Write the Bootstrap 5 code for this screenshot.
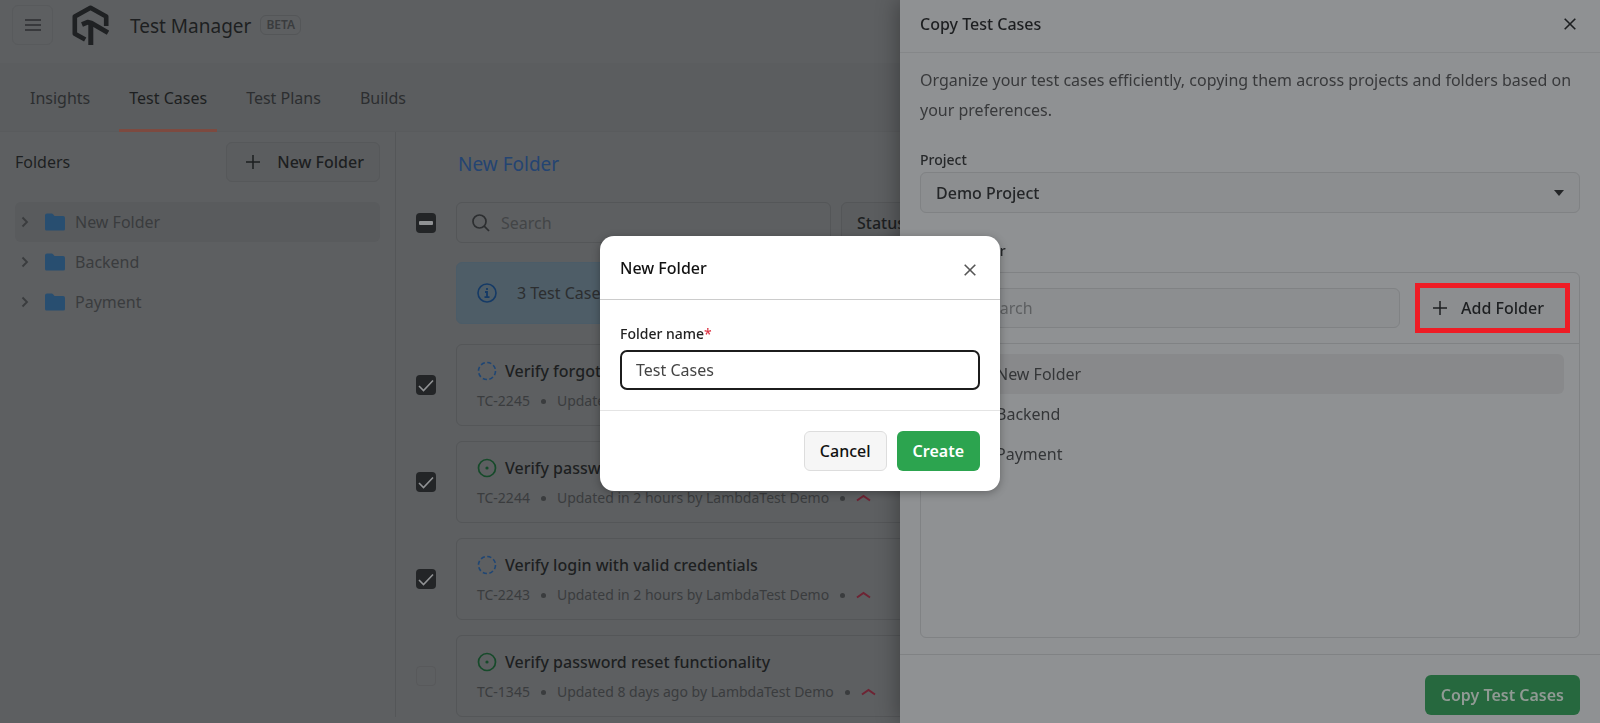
<!DOCTYPE html>
<html lang="en">
<head>
<meta charset="utf-8">
<meta name="viewport" content="width=device-width, initial-scale=1">
<title>Test Manager</title>
<link href="https://cdn.jsdelivr.net/npm/bootstrap@5.3.0/dist/css/bootstrap.min.css" rel="stylesheet">
<style>
  :root { --page: #5d5f61; --line: #545658; --ink: #1d1f21; --soft: #2c2e30; --mute: #3a3c3e; --panel: #8f9193; --panel-line: #808284; }
  body { font-family: "Noto Sans", "Open Sans", sans-serif; font-size: 16px; line-height: 24px; color: var(--soft); background: var(--page); overflow-x: hidden; }
  h1, h2, p { margin: 0; font-size: 16px; line-height: 24px; font-weight: 400; }
  button, input, select { font-family: inherit; }
  svg { flex: none; display: block; }
  a { text-decoration: none; color: inherit; }
  .topbar { height: 63px; padding: 5px 12px 0; }
  .menu-btn { width: 41px; height: 40px; padding: 0; border: 1px solid #585a5c; border-radius: 6px; color: var(--soft); margin-right: 19px; }
  .brand { height: 40px; }
  .app-name { font-size: 19px; color: var(--ink); margin: 2px 9px 0 21px; }
  .beta { font-size: 12px; line-height: 18px; font-weight: 600; color: var(--mute); border: 1px solid var(--line); border-radius: 6px; padding: 0 5px; }
  .tabs { height: 69px; background: #5b5d5f; border-bottom: 1px solid #595b5d; padding-left: 20px; gap: 19px; }
  .tabs a { padding: 4px 10px 0; height: 69px; border-bottom: 3px solid transparent; display: flex; align-items: center; }
  .tabs a.on { border-color: #7d4a40; color: var(--ink); }
  .side { width: 396px; border-right: 1px solid var(--line); padding: 10px 15px; }
  .side h2 { color: var(--ink); }
  .soft-btn { height: 40px; padding: 0 15px; border: 1px solid #56585a; border-radius: 6px; background: #5b5d5f; color: var(--ink); font-size: 16px; line-height: 24px; font-weight: 500; }
  .side .soft-btn { width: 154px; padding-left: 19px; }
  .tree { list-style: none; margin: 0; padding: 0; }
  .tree a { display: flex; align-items: center; height: 40px; padding-left: 6px; border-radius: 6px; color: var(--mute); }
  .tree a.on { background: #595b5d; }
  .folder-icon { margin: 0 10px 0 16px; color: #284e70; }
  .main { padding: 10px 20px 0; }
  .crumb { font-size: 19px; line-height: 28px; color: #244472; margin-left: 42px; }
  .line-row { display: flex; align-items: center; gap: 20px; }
  .tick { appearance: none; width: 20px; height: 20px; margin: 0; flex: none; border-radius: 4px; background: #232527 center/20px no-repeat; }
  .tick:checked { background-image: url("data:image/svg+xml,%3Csvg xmlns='http://www.w3.org/2000/svg' viewBox='0 0 20 20'%3E%3Cpath d='M3 11l4.500 4.500L17 5.500' fill='none' stroke='%23909294' stroke-width='1.600'/%3E%3C/svg%3E"); }
  .tick.some { background-image: url("data:image/svg+xml,%3Csvg xmlns='http://www.w3.org/2000/svg' viewBox='0 0 20 20'%3E%3Crect x='3' y='8' width='14' height='4' rx='1' fill='%23909294'/%3E%3C/svg%3E"); }
  .tick.off { background-color: transparent; border: 1px solid #58595b; }
  .find { display: flex; align-items: center; height: 41px; border: 1px solid var(--line); border-radius: 6px; color: var(--soft); }
  .find input { border: 0; background: none; outline: 0; width: 100%; padding: 0; color: inherit; }
  .find input::placeholder { color: #434547; opacity: 1; }
  .find-main { width: 375px; padding-left: 15px; gap: 11px; }
  .status { height: 41px; width: 140px; margin-left: -10px; padding: 0 15px; border: 1px solid var(--line); border-radius: 6px; background: #5b5d5f; color: var(--ink); font-weight: 500; appearance: none; }
  .note { margin: 19px 0 20px 40px; height: 62px; border: 1px solid #4b5c68; border-radius: 6px; background: #4e5d67; padding-left: 20px; gap: 20px; }
  .cases { gap: 15px; }
  .tcase { height: 82px; flex: 1; border: 1px solid var(--line); border-radius: 6px; padding: 14px 20px 0; }
  .tcase h2 { font-weight: 500; color: var(--ink); }
  .meta { font-size: 14px; line-height: 20px; color: var(--mute); gap: 11px; margin-top: 8px; }
  .dot { width: 5px; height: 5px; border-radius: 50%; background: var(--mute); }
  .drawer { position: fixed; top: 0; right: 0; bottom: 0; width: 700px; max-width: 100%; background: var(--panel); box-shadow: -3px 0 20px rgba(0,0,0,.3); color: #38393b; }
  .drawer-head { height: 53px; padding: 0 24px 4px 20px; border-bottom: 1px solid #858789; color: var(--ink); }
  .drawer-head h2, .dialog-head h2 { font-weight: 500; }
  .drawer-body { padding: 12px 20px 16px; }
  .intro { line-height: 30px; margin-bottom: 23px; }
  .field-label { font-size: 14px; line-height: 24px; font-weight: 500; color: #26282a; }
  .icon-btn { border: 0; background: none; padding: 0; color: inherit; }
  .pick { height: 41px; width: 100%; border: 1px solid var(--panel-line); border-radius: 6px; padding: 0 15px; color: #242628; font-weight: 500; background: #8c8e90 url("data:image/svg+xml,%3Csvg xmlns='http://www.w3.org/2000/svg' viewBox='0 0 10 6'%3E%3Cpath d='M0 0h10L5 6z' fill='%23242628'/%3E%3C/svg%3E") right 15px center/10px 6px no-repeat; appearance: none; margin-bottom: 26px; }
  .folder-box { border: 1px solid var(--panel-line); border-radius: 6px; margin-top: 9px; }
  .folder-bar { padding: 15px 14px 15px 15px; border-bottom: 1px solid var(--panel-line); gap: 20px; }
  .drawer .find { border-color: var(--panel-line); background: #8c8e90; height: 40px; padding-left: 15px; gap: 12px; }
  .drawer .find input::placeholder { color: #5d5f61; }
  .drawer .soft-btn { width: 145px; padding: 0 0 0 13px; gap: 14px; border: 0; border-radius: 0; background: #8c8e90; outline: 5px solid #ee1c25; }
  .drawer .tree { padding: 10px 15px; }
  .drawer .tree a { color: #343638; }
  .drawer .tree a.on { background: #88898b; }
  .drawer .folder-icon { color: #3a6a94; }
  .drawer-foot { padding: 20px 20px 8px; border-top: 1px solid var(--panel-line); }
  .go { height: 40px; padding: 0 16px; border: 0; border-radius: 6px; font-weight: 600; font-size: 16px; line-height: 24px; color: #fff; background: #2ca44f; }
  .drawer .go { background: #26683e; color: #909a94; }
  .dialog-wrap { position: fixed; inset: 0; display: flex; align-items: center; justify-content: center; }
  .dialog { width: 400px; border-radius: 14px; background: #fff; margin-top: 4px; box-shadow: 0 2px 8px rgba(0,0,0,.3); }
  .dialog-head { height: 64px; padding: 0 24px 0 20px; border-bottom: 1px solid #ccc; color: #111; }
  .dialog-head .icon-btn { color: #555; padding-top: 4px; }
  .dialog-body { padding: 21px 20px 20px; border-bottom: 1px solid #e4e4e4; }
  .dialog-body label { color: #222; }
  .dialog-body input { width: 100%; height: 40px; margin-top: 4px; border: 2px solid #1c1c1c; border-radius: 7px; padding: 0 14px; color: #444; outline: 0; display: block; }
  .dialog-foot { padding: 20px; gap: 10px; }
  .dialog .soft-btn { background: #f6f6f6; border-color: #ddd; color: #111; }
</style>
<script src="https://cdn.jsdelivr.net/npm/bootstrap@5.3.0/dist/js/bootstrap.bundle.min.js"></script>
</head>
<body>
<svg width="0" height="0" class="position-absolute" aria-hidden="true">
  <symbol id="plus" viewBox="0 0 14 14"><path d="M7 0v14M0 7h14" stroke="currentColor" stroke-width="1.500"/></symbol>
  <symbol id="chev" viewBox="0 0 8 12"><path d="M1.500 1.500L6 6l-4.500 4.500" fill="none" stroke="currentColor" stroke-width="1.800"/></symbol>
  <symbol id="folder" viewBox="0 0 20 18"><path d="M0 2.500Q0 .5 2 .5h4.500q1 0 1.800 1L9.500 3H18q2 0 2 2v11q0 1.500-1.500 1.500h-17Q0 17.500 0 16z" fill="currentColor"/></symbol>
  <symbol id="cross" viewBox="0 0 12 12"><path d="M.7.7l10.600 10.600M11.300.7L.7 11.300" stroke="currentColor" stroke-width="1.600"/></symbol>
  <symbol id="lens" viewBox="0 0 18 18"><circle cx="7.500" cy="7.500" r="6.500" fill="none" stroke="currentColor" stroke-width="1.700"/><path d="M12.200 12.200L17 17" stroke="currentColor" stroke-width="1.700"/></symbol>
  <symbol id="dashed" viewBox="0 0 20 20"><circle cx="10" cy="10" r="8.500" fill="none" stroke="#1f4674" stroke-width="1.600" stroke-dasharray="4.200 2.475"/></symbol>
  <symbol id="open" viewBox="0 0 20 20"><circle cx="10" cy="10" r="8.500" fill="none" stroke="#164a2a" stroke-width="1.700"/><circle cx="10" cy="10" r="1.600" fill="#164a2a"/></symbol>
  <symbol id="up" viewBox="0 0 15 8"><path d="M1 6.500L7.500 2 14 6.500" fill="none" stroke="#6e2333" stroke-width="2"/></symbol>
</svg>

<header class="topbar d-flex align-items-start">
  <button class="menu-btn bg-transparent d-flex align-items-center justify-content-center" aria-label="Menu"><svg width="16" height="12"><path d="M0 1h16M0 6h16M0 11h16" stroke="currentColor" stroke-width="1.500"/></svg></button>
  <svg width="37" height="40" viewBox="0 0 37 40"><g fill="none" stroke="#1f2123" stroke-width="4.600" stroke-linejoin="round"><path d="M34.200 21V11.500L18.500 2.700 2.800 11.500v17.300l10.400 5.800"/><path d="M10 19.500l5.500-2.300 4 1 16.500 9.500" stroke-width="4.800"/><path d="M18.800 18v22" stroke-width="5"/></g></svg>
  <div class="brand d-flex align-items-center">
    <h1 class="app-name">Test Manager</h1><span class="beta">BETA</span>
  </div>
</header>
<nav class="tabs d-flex">
  <a href="#">Insights</a><a href="#" class="on">Test Cases</a><a href="#">Test Plans</a><a href="#">Builds</a>
</nav>
<div class="d-flex">
  <aside class="side flex-shrink-0">
    <div class="d-flex justify-content-between align-items-center mb-3">
      <h2>Folders</h2>
      <button class="soft-btn d-flex align-items-center justify-content-between"><svg width="14" height="14"><use href="#plus"/></svg>New Folder</button>
    </div>
    <ul class="tree mt-1 pt-1">
      <li><a href="#" class="on"><svg width="8" height="12"><use href="#chev"/></svg><svg class="folder-icon" width="20" height="18"><use href="#folder"/></svg>New Folder</a></li>
      <li><a href="#"><svg width="8" height="12"><use href="#chev"/></svg><svg class="folder-icon" width="20" height="18"><use href="#folder"/></svg>Backend</a></li>
      <li><a href="#"><svg width="8" height="12"><use href="#chev"/></svg><svg class="folder-icon" width="20" height="18"><use href="#folder"/></svg>Payment</a></li>
    </ul>
  </aside>
  <main class="main flex-grow-1">
    <div class="mb-4 pt-2"><a href="#" class="crumb d-block">New Folder</a></div>
    <div class="line-row">
      <input type="checkbox" class="tick some" aria-label="Select all">
      <div class="find find-main"><svg width="18" height="18"><use href="#lens"/></svg><input type="search" placeholder="Search" aria-label="Search test cases"></div>
      <select class="status" aria-label="Status"><option>Status</option></select>
    </div>
    <div class="note d-flex align-items-center"><svg width="20" height="20" fill="none" stroke="#153a66" stroke-width="1.600"><circle cx="10" cy="10" r="9"/><path d="M10 5v2M8 9h2v5M7.500 14.200h5" stroke-width="1.800"/></svg><span>3 Test Cases selected</span></div>
    <div class="cases d-flex flex-column">
      <div class="line-row"><input type="checkbox" class="tick" checked aria-label="TC-2245"><article class="tcase">
        <div class="d-flex align-items-center gap-2"><svg width="20" height="20"><use href="#dashed"/></svg><h2>Verify forgot password flow</h2></div>
        <div class="meta d-flex align-items-center"><span>TC-2245</span><i class="dot"></i><span>Updated in 2 hours by LambdaTest Demo</span><i class="dot"></i><svg width="15" height="8"><use href="#up"/></svg></div></article></div>
      <div class="line-row"><input type="checkbox" class="tick" checked aria-label="TC-2244"><article class="tcase">
        <div class="d-flex align-items-center gap-2"><svg width="20" height="20"><use href="#open"/></svg><h2>Verify password reset</h2></div>
        <div class="meta d-flex align-items-center"><span>TC-2244</span><i class="dot"></i><span>Updated in 2 hours by LambdaTest Demo</span><i class="dot"></i><svg width="15" height="8"><use href="#up"/></svg></div></article></div>
      <div class="line-row"><input type="checkbox" class="tick" checked aria-label="TC-2243"><article class="tcase">
        <div class="d-flex align-items-center gap-2"><svg width="20" height="20"><use href="#dashed"/></svg><h2>Verify login with valid credentials</h2></div>
        <div class="meta d-flex align-items-center"><span>TC-2243</span><i class="dot"></i><span>Updated in 2 hours by LambdaTest Demo</span><i class="dot"></i><svg width="15" height="8"><use href="#up"/></svg></div></article></div>
      <div class="line-row"><input type="checkbox" class="tick off" aria-label="TC-1345"><article class="tcase">
        <div class="d-flex align-items-center gap-2"><svg width="20" height="20"><use href="#open"/></svg><h2>Verify password reset functionality</h2></div>
        <div class="meta d-flex align-items-center"><span>TC-1345</span><i class="dot"></i><span>Updated 8 days ago by LambdaTest Demo</span><i class="dot"></i><svg width="15" height="8"><use href="#up"/></svg></div></article></div>
    </div>
  </main>
</div>

<section class="drawer d-flex flex-column" aria-label="Copy Test Cases">
  <div class="drawer-head d-flex align-items-center justify-content-between"><h2>Copy Test Cases</h2><button class="icon-btn" aria-label="Close panel"><svg width="12" height="12"><use href="#cross"/></svg></button></div>
  <div class="drawer-body flex-grow-1 d-flex flex-column">
    <p class="intro">Organize your test cases efficiently, copying them across projects and folders based on your preferences.</p>
    <label class="field-label" for="project">Project</label>
    <select id="project" class="pick"><option>Demo Project</option></select>
    <label class="field-label" for="folder-find">Select Folder</label>
    <div class="folder-box flex-grow-1">
      <div class="folder-bar d-flex">
        <div class="find flex-grow-1"><svg width="18" height="18"><use href="#lens"/></svg><input id="folder-find" type="search" placeholder="Search"></div>
        <button class="soft-btn d-flex align-items-center"><svg width="14" height="14"><use href="#plus"/></svg>Add Folder</button>
      </div>
      <ul class="tree">
        <li><a href="#" class="on"><svg width="8" height="12"><use href="#chev"/></svg><svg class="folder-icon" width="20" height="18"><use href="#folder"/></svg>New Folder</a></li>
        <li><a href="#"><svg width="8" height="12"><use href="#chev"/></svg><svg class="folder-icon" width="20" height="18"><use href="#folder"/></svg>Backend</a></li>
        <li><a href="#"><svg width="8" height="12"><use href="#chev"/></svg><svg class="folder-icon" width="20" height="18"><use href="#folder"/></svg>Payment</a></li>
      </ul>
    </div>
  </div>
  <div class="drawer-foot text-end"><button class="go">Copy Test Cases</button></div>
</section>

<div class="dialog-wrap">
  <form class="dialog" role="dialog" aria-label="New Folder">
    <div class="dialog-head d-flex align-items-center justify-content-between"><h2>New Folder</h2><button type="button" class="icon-btn" aria-label="Close"><svg width="12" height="12"><use href="#cross"/></svg></button></div>
    <div class="dialog-body"><label class="field-label" for="fname">Folder name<span class="text-danger">*</span></label><input id="fname" type="text" value="Test Cases"></div>
    <div class="dialog-foot d-flex justify-content-end"><button type="button" class="soft-btn">Cancel</button><button type="button" class="go">Create</button></div>
  </form>
</div>
</body>
</html>
